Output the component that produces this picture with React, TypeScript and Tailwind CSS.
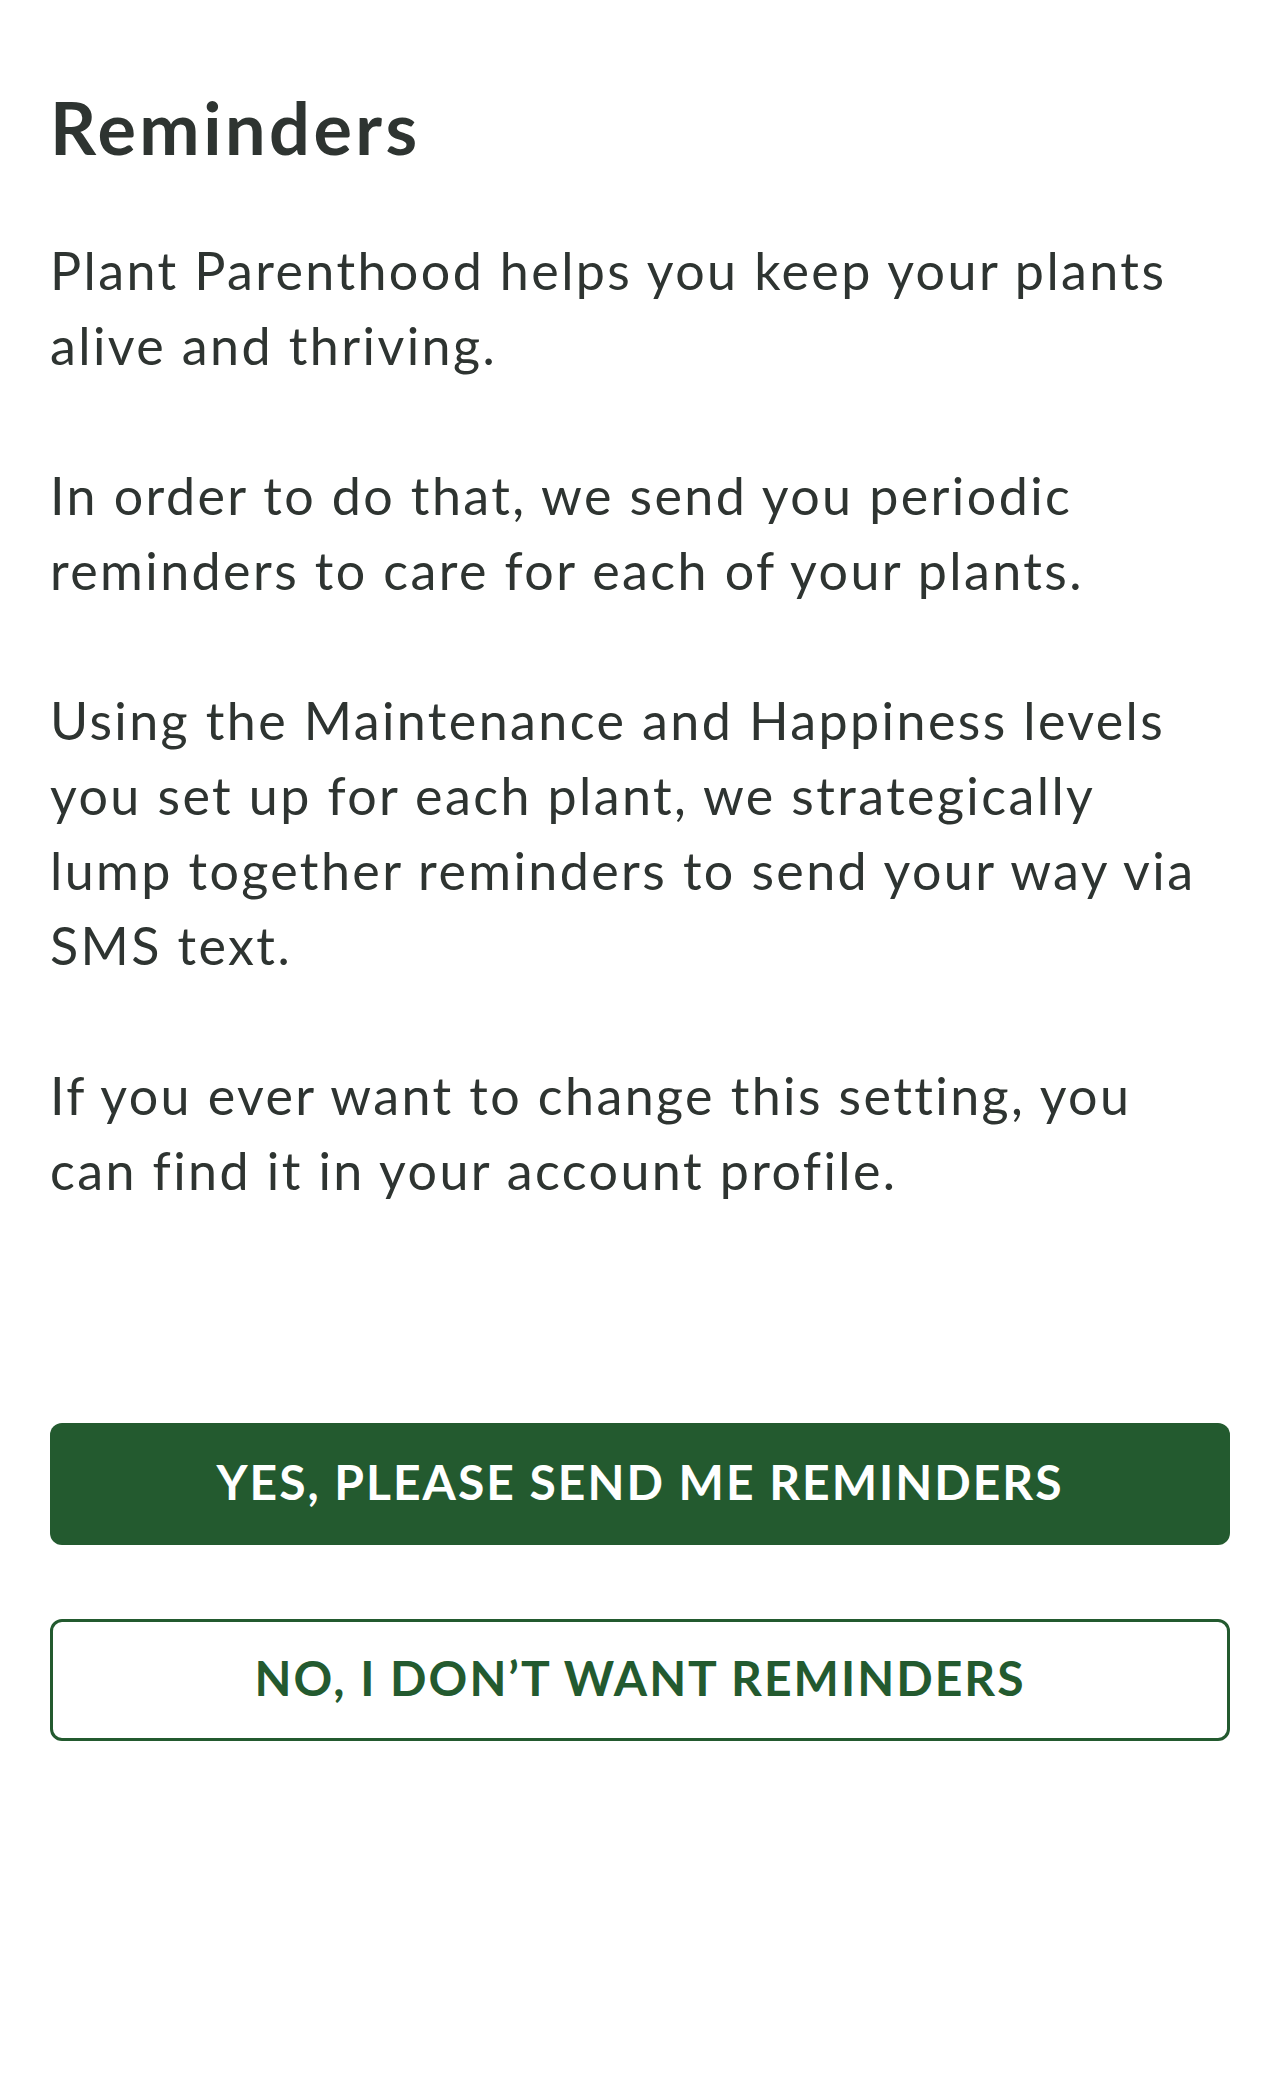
const paragraphs: string[][] = [
    ["Plant Parenthood helps you keep your plants", "alive and thriving."],
    ["In order to do that, we send you periodic", "reminders to care for each of your plants."],
    [
        "Using the Maintenance and Happiness levels",
        "you set up for each plant, we strategically",
        "lump together reminders to send your way via",
        "SMS text.",
    ],
    ["If you ever want to change this setting, you", "can find it in your account profile."],
];

const App = () => {
    return (
        <div className="min-h-[2077px] w-full bg-white px-[50px] pt-[86px] font-['Lato','Noto_Sans',sans-serif] text-[#2e3431]">
            <h1 className="text-[72px] font-bold leading-[82px] tracking-[3.5px]">Reminders</h1>
            <div className="mt-[65px] flex flex-col gap-[75px]">
                {paragraphs.map((lines, i) => (
                    <p key={i} className="text-[52px] leading-[75px] tracking-[2.4px]">
                        {lines.map((line, j) => (
                            <span key={j} className="block whitespace-nowrap">
                                {line}
                            </span>
                        ))}
                    </p>
                ))}
            </div>
            <div className="mt-[215px] flex flex-col gap-[74px]">
                <button className="h-[122px] w-full rounded-[12px] bg-[#235a2f] pb-[4px] text-[48px] font-bold uppercase tracking-[2px] text-white">
                    Yes, please send me reminders
                </button>
                <button className="h-[122px] w-full rounded-[12px] border-[3px] border-[#235a2f] bg-white pb-[4px] text-[48px] font-bold uppercase tracking-[2px] text-[#235a2f]">
                    No, I don’t want reminders
                </button>
            </div>
        </div>
    );
};

export default App;
